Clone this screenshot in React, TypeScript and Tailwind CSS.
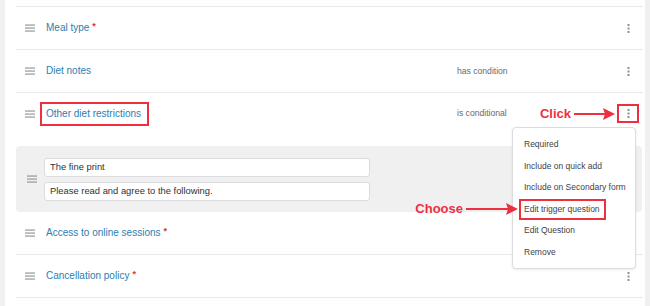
import React from "react";

const RED = "#ee2f3e";

function Grip() {
  return (
    <svg width="10" height="8" viewBox="0 0 10 8" className="shrink-0">
      <rect x="0" y="0.5" width="10" height="1.1" fill="#8c8f94" />
      <rect x="0" y="3.5" width="10" height="1.1" fill="#8c8f94" />
      <rect x="0" y="6.5" width="10" height="1.1" fill="#8c8f94" />
    </svg>
  );
}

function Kebab() {
  return (
    <svg width="3" height="9" viewBox="0 0 3 9">
      <rect x="0.5" y="0" width="2" height="2" fill="#8c8f94" />
      <rect x="0.5" y="3.5" width="2" height="2" fill="#8c8f94" />
      <rect x="0.5" y="7" width="2" height="2" fill="#8c8f94" />
    </svg>
  );
}

function Arrow({ w }: { w: number }) {
  return (
    <svg width={w} height="14" viewBox={`0 0 ${w} 14`} className="shrink-0">
      <line x1="0" y1="7" x2={w - 10} y2="7" stroke={RED} strokeWidth="2" />
      <polygon points={`${w - 12},1 ${w},7 ${w - 12},13 ${w - 10},7`} fill={RED} />
    </svg>
  );
}

function Row({
  title,
  required,
  status,
  highlightTitle,
  clickNote,
  border = true,
}: {
  title: string;
  required?: boolean;
  status?: string;
  highlightTitle?: boolean;
  clickNote?: boolean;
  border?: boolean;
}) {
  return (
    <div
      className={`flex items-center ${border ? "h-[43px] border-b border-[#e8e9eb]" : "h-[41px]"}`}
    >
      <div className="ml-[9px]">
        <Grip />
      </div>
      <div className="ml-[11px] flex-1 flex items-start">
        <span className="relative text-[10px] leading-[12px] text-[#2c7db0]">
          {title}
          {highlightTitle && (
            <span className="absolute -left-[6px] -right-[8px] -top-[6px] -bottom-[6px] border-2 border-[#ee2f3e]" />
          )}
        </span>
        {required && (
          <span className="ml-[3px] text-[9px] leading-[9px] font-bold text-[#d63638]">*</span>
        )}
      </div>
      <div className="w-[160px] text-[8.6px] text-[#646970]">{status}</div>
      <div className="relative mr-[4px] flex h-[19px] w-[22px] items-center justify-center">
        <Kebab />
        {clickNote && (
          <>
            <span className="absolute inset-0 border-2 border-[#ee2f3e]" />
            <div className="absolute right-full top-1/2 mr-[2px] flex -translate-y-1/2 items-center">
              <span className="mr-[3px] text-[13px] font-bold leading-[14px] text-[#ee2f3e]">
                Click
              </span>
              <Arrow w={41} />
            </div>
          </>
        )}
      </div>
    </div>
  );
}

const menuItems = [
  "Required",
  "Include on quick add",
  "Include on Secondary form",
  "Edit trigger question",
  "Edit Question",
  "Remove",
];

export default function App() {
  return (
    <div
      className="flex h-[306px] w-[650px] overflow-hidden bg-[#f0f0f1]"
      style={{ fontFamily: '"Liberation Sans", Arial, sans-serif' }}
    >
      <div className="relative ml-[5px] flex w-[640px] flex-col bg-white pl-[11px] pr-[2px] pt-[6px]">
        <div className="border-t border-[#e8e9eb]" />
        <Row title="Meal type" required />
        <Row title="Diet notes" status="has condition" />
        <Row
          title="Other diet restrictions"
          status="is conditional"
          highlightTitle
          clickNote
          border={false}
        />
        <div className="mt-[12px] mr-[1px] flex h-[66px] shrink-0 items-center rounded-[4px] bg-[#f0f0f1]">
          <div className="ml-[11px]">
            <Grip />
          </div>
          <div className="ml-[7px] flex flex-col gap-[5px]">
            <div className="flex h-[19px] w-[326px] items-center rounded-[3px] border border-[#dcdcde] bg-white pl-[5px] text-[9.4px] text-[#2c3338]">
              The fine print
            </div>
            <div className="flex h-[19px] w-[326px] items-center rounded-[3px] border border-[#dcdcde] bg-white pl-[5px] text-[9.4px] text-[#2c3338]">
              Please read and agree to the following.
            </div>
          </div>
        </div>
        <Row title="Access to online sessions" required />
        <Row title="Cancellation policy" required />

        <div className="absolute left-[507px] top-[127px] w-[124px] rounded-[4px] border border-[#dcdcde] bg-white pt-[6px] pb-[5px] shadow-[0_1px_3px_rgba(0,0,0,0.08)]">
          {menuItems.map((it) => (
            <div
              key={it}
              className="relative flex h-[21.5px] items-center whitespace-nowrap px-[11px] text-[8.5px] text-[#3c434a]"
            >
              {it}
              {it === "Edit trigger question" && (
                <>
                  <span className="absolute left-[6px] right-[29px] top-0 bottom-0 border-2 border-[#ee2f3e]" />
                  <div className="absolute right-full top-1/2 -mr-[5px] flex -translate-y-1/2 items-center">
                    <span className="mr-[3px] text-[13px] font-bold leading-[14px] text-[#ee2f3e]">
                      Choose
                    </span>
                    <Arrow w={52} />
                  </div>
                </>
              )}
            </div>
          ))}
        </div>
      </div>
    </div>
  );
}
